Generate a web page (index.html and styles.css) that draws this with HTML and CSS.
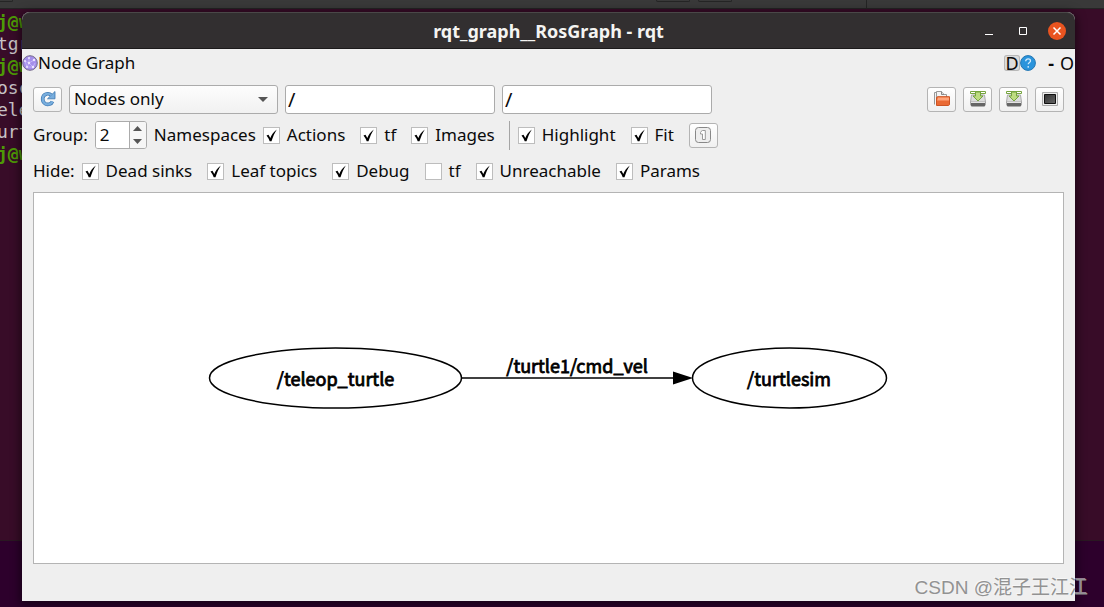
FILE: index.html
```html
<!DOCTYPE html>
<html lang="en">
<head>
<meta charset="utf-8">
<title>rqt_graph__RosGraph - rqt</title>
<link rel="stylesheet" href="styles.css">
</head>
<body>
<div class="desktop">
  <div class="terminal">
    <div class="terminal-bar"><span class="tab tab-left"></span><span class="tab tab-a"></span><span class="tab tab-b"></span><span class="tab-edge"></span></div>
    <div class="terminal-text">
      <div class="prompt">j@w</div>
      <div>tgr</div>
      <div class="prompt">j@w</div>
      <div>osc</div>
      <div>ele</div>
      <div>urt</div>
      <div class="prompt">j@w</div>
    </div>
  </div>

  <main class="window">
    <header class="titlebar">
      <h1 class="title">rqt_graph__RosGraph - rqt</h1>
      <div class="window-buttons">
        <button class="win-btn" aria-label="Minimize"><svg width="10" height="10" viewBox="0 0 10 10"><path d="M1 8.500h8" stroke="#fff" fill="none"/></svg></button>
        <button class="win-btn" aria-label="Maximize"><svg width="10" height="10" viewBox="0 0 10 10"><path d="M1.500 1.500h7v7h-7z" stroke="#fff" fill="none"/></svg></button>
        <button class="win-btn close" aria-label="Close"><svg width="10" height="10" viewBox="0 0 10 10"><path d="M1.500 1.500l7 7M8.500 1.500l-7 7" stroke="#fff" stroke-width="1.500" fill="none"/></svg></button>
      </div>
    </header>

    <div class="dock-title">
      <svg width="16" height="16" viewBox="0 0 16 16"><circle cx="8" cy="8" r="7.300" fill="#a48eea" stroke="#74698c"/><path d="M3 6l4 2 5-3M7 8l-2 4M7 8l4 4 2-4M7 8V3M3 6l2 6 6 0" stroke="#cfc0ff" stroke-width=".7" fill="none"/><g fill="#eee6ff"><circle cx="3" cy="6" r="1"/><circle cx="7" cy="8" r="1.200"/><circle cx="12" cy="5" r="1.200"/><circle cx="5" cy="12" r="1"/><circle cx="11" cy="12" r="1.200"/><circle cx="7" cy="3" r="1"/></g></svg>
      <h2 class="dock-name">Node Graph</h2>
      <div class="dock-actions">
        <button class="dock-btn boxed" aria-label="Reload">D</button>
        <button class="dock-btn" aria-label="Help"><svg width="16" height="16" viewBox="0 0 16 16"><circle cx="8" cy="8" r="7.400" fill="#2a94dc" stroke="#2476b2"/><path d="M5.700 6.200c0-3.300 4.800-3 4.800-.3 0 1.600-2.300 1.600-2.300 3.400M8.200 11v1.700" stroke="#d4ebfc" stroke-width="1.300" fill="none"/></svg></button>
        <button class="dock-btn dash">-</button>
        <button class="dock-btn">O</button>
      </div>
    </div>

    <div class="content">
      <div class="row">
        <button class="tool-btn" aria-label="Refresh"><svg width="18" height="18" viewBox="0 0 18 18"><path d="M13.500 11.500c-1 2.500-4.500 3.800-7.200 2.200C2.300 11.200 3 5 7.500 3.900c2-.4 3.600.1 4.900 1.400" stroke="#3c77b0" stroke-width="3.600" fill="none"/><path d="M16 1.500v7.300H8.500z" fill="#78aede" stroke="#3c77b0" stroke-width=".8"/><path d="M13.500 11.500c-1 2.500-4.500 3.800-7.200 2.200C2.300 11.200 3 5 7.500 3.900c2-.4 3.600.1 4.900 1.400" stroke="#78aede" stroke-width="2.200" fill="none"/></svg></button>
        <div class="combo">
          <select class="field" aria-label="Graph type"><option>Nodes only</option><option>Nodes/Topics (active)</option><option>Nodes/Topics (all)</option></select>
          <svg class="combo-arrow" width="10" height="5" viewBox="0 0 10 5"><path d="M0 0h10L5 5z" fill="#555"/></svg>
        </div>
        <input class="field filter" type="text" value="/" aria-label="Node filter">
        <input class="field filter" type="text" value="/" aria-label="Topic filter">
        <div class="file-tools">
          <button class="tool-btn" aria-label="Open"><svg width="18" height="18" viewBox="0 0 18 18"><path d="M1.500 14.500V2.500H4M3.500 14V1.500h5l3 3h2V8" fill="#f4f4f4" stroke="#999"/><path d="M8.500 1.500v3h3" fill="#ddd" stroke="#888"/><path d="M3.500 7.500l1-.8h12v8l-1 .8h-12z" fill="#ea6a34" stroke="#cc5424"/><path d="M5 7.500h11v3H4z" fill="#ffa47a"/></svg></button>
          <button class="tool-btn" aria-label="Save as DOT"><svg width="18" height="18" viewBox="0 0 18 18"><path d="M2.500 5l-1 7h15l-1-7z" fill="#dcdcdc" stroke="#aaa"/><path d="M1.500 12h15v3l-1 1.500h-13l-1-1.500z" fill="#666"/><path d="M2 12.500h14" stroke="#e4e4e4"/><path d="M1.500 1.500h15v2h-15z" fill="#fff" stroke="#76a53e"/><path d="M6.500 2h5v4h2.500L9 11 4 6h2.500z" fill="#bddc80" stroke="#75a33d"/></svg></button>
          <button class="tool-btn" aria-label="Save as SVG"><svg width="18" height="18" viewBox="0 0 18 18"><path d="M2.500 5l-1 7h15l-1-7z" fill="#dcdcdc" stroke="#aaa"/><path d="M1.500 12h15v3l-1 1.500h-13l-1-1.500z" fill="#666"/><path d="M2 12.500h14" stroke="#e4e4e4"/><path d="M1.500 1.500h15v2h-15z" fill="#fff" stroke="#76a53e"/><path d="M6.500 2h5v4h2.500L9 11 4 6h2.500z" fill="#bddc80" stroke="#75a33d"/></svg></button>
          <button class="tool-btn" aria-label="Save as image"><svg width="18" height="18" viewBox="0 0 18 18"><defs><linearGradient id="screen" x2="1" y2="1"><stop stop-color="#333"/><stop offset="1" stop-color="#666"/></linearGradient></defs><path d="M1.500 2.500h15v13h-15z" fill="#eee" stroke="#aaa"/><path d="M3.500 4.500h11v9h-11z" fill="url(#screen)" stroke="#111"/></svg></button>
        </div>
      </div>

      <div class="row">
        <div class="pair">
          <label for="group">Group:</label>
          <div class="spin">
            <input id="group" class="spin-value" type="text" inputmode="numeric" value="2">
            <div class="spin-buttons">
              <button aria-label="Increase"><svg width="9" height="5" viewBox="0 0 9 5"><path d="M0 5h9L4.500 0z" fill="#555"/></svg></button>
              <button aria-label="Decrease"><svg width="9" height="5" viewBox="0 0 9 5"><path d="M0 0h9L4.500 5z" fill="#555"/></svg></button>
            </div>
          </div>
        </div>
        <div class="pair">
          <span>Namespaces</span>
          <div class="checks">
            <label class="check"><input type="checkbox" checked>Actions</label>
            <label class="check"><input type="checkbox" checked>tf</label>
            <label class="check"><input type="checkbox" checked>Images</label>
            <span class="divider"></span>
            <label class="check"><input type="checkbox" checked>Highlight</label>
            <label class="check"><input type="checkbox" checked>Fit</label>
            <button class="tool-btn" aria-label="Fit in view"><svg width="18" height="18" viewBox="0 0 18 18"><rect x="1.500" y="1.500" width="15" height="15" rx="3" fill="#eee" stroke="#888"/><path d="M7 5.500l1.500-1h2.800v9H8.500V8H6.500V6.500z" fill="#fff" stroke="#999"/></svg></button>
          </div>
        </div>
      </div>

      <div class="row">
        <div class="pair">
          <span>Hide:</span>
          <div class="checks">
            <label class="check"><input type="checkbox" checked>Dead sinks</label>
            <label class="check"><input type="checkbox" checked>Leaf topics</label>
            <label class="check"><input type="checkbox" checked>Debug</label>
            <label class="check"><input type="checkbox">tf</label>
            <label class="check"><input type="checkbox" checked>Unreachable</label>
            <label class="check"><input type="checkbox" checked>Params</label>
          </div>
        </div>
      </div>

      <div class="view">
        <svg class="graph" viewBox="0 0 1029 370" role="img" aria-label="ROS graph">
          <g fill="none" stroke="#000" stroke-width="1.500">
            <ellipse cx="301.500" cy="185" rx="126" ry="30"/>
            <ellipse cx="755.500" cy="185" rx="97" ry="30"/>
            <path d="M428 185h212"/>
          </g>
          <path d="M639 178.500l20 6.500-20 6.500z"/>
          <g class="graph-text">
            <text x="301.500" y="193">/teleop_turtle</text>
            <text x="543" y="180">/turtle1/cmd_vel</text>
            <text x="755" y="193">/turtlesim</text>
          </g>
        </svg>
      </div>
    </div>
  </main>
  <div class="watermark">CSDN @混子王江江</div>
</div>
</body>
</html>
```
FILE: styles.css
```css
* { box-sizing: border-box; }
body {
  margin: 0;
  font: 17px/24px "Noto Sans", "Open Sans", sans-serif;
  color: #0a0a0a;
}
button, input, select { font: inherit; color: inherit; }
button { padding: 0; border: 0; background: none; }
svg { display: block; }

.desktop {
  position: relative;
  display: flex;
  min-height: 100vh;
  padding: 12px 29px 6px 22px;
  overflow: hidden;
  background: #2d002c;
}
.terminal {
  position: absolute;
  inset: 0 0 66px;
  background: #380c28;
  border-bottom: 1px solid #2a1822;
}
.terminal-bar {
  position: relative;
  height: 9px;
  background: #393939;
  border-bottom: 1px solid #242424;
}
.tab {
  position: absolute;
  top: 0;
  width: 34px;
  height: 2px;
  border: 1px solid #252525;
  border-top: 0;
  border-radius: 0 0 3px 3px;
}
.tab-left { left: -21px; }
.tab-a { left: 656px; }
.tab-b { left: 698px; }
.tab-edge {
  position: absolute;
  left: 866px;
  width: 1px;
  height: 8px;
  background: #242424;
}
.terminal-text {
  margin-left: -3px;
  padding-top: 2px;
  font: 18px/22px "DejaVu Sans Mono", monospace;
  color: #c8c3c6;
}
.prompt { font-weight: 700; color: #4e9a06; }

.window {
  position: relative;
  display: flex;
  flex: 1;
  flex-direction: column;
  min-width: 0;
  background: #efefef;
  border-radius: 8px 8px 0 0;
  box-shadow: 0 2px 10px 2px rgba(0, 0, 0, .5);
}
.titlebar {
  display: grid;
  grid-template-columns: 1fr auto 1fr;
  align-items: center;
  height: 37px;
  padding: 0 9px;
  background: #322f30;
  border-top: 1px solid #4a4848;
  border-bottom: 1px solid #1c1a1b;
  border-radius: 8px 8px 0 0;
}
.title {
  grid-column: 2;
  margin: 0;
  font-size: 18px;
  line-height: 22px;
  font-weight: 700;
  color: #f4f4f2;
}
.window-buttons {
  display: flex;
  gap: 16px;
  justify-content: flex-end;
}
.win-btn {
  display: grid;
  place-items: center;
  width: 18px;
  height: 18px;
  border-radius: 50%;
}
.win-btn.close { background: #e95420; }

.dock-title {
  display: flex;
  align-items: center;
  height: 28px;
}
.dock-name { margin: 0; font-size: 17px; font-weight: 400; }
.dock-actions {
  display: flex;
  align-items: center;
  margin-left: auto;
  padding-right: 1px;
}
.dock-btn { font-size: 18px; line-height: 16px; }
.boxed {
  width: 16px;
  height: 16px;
  background: #dcdcdc;
  border-radius: 3px;
  box-shadow: inset 0 0 0 1px #b8b8b8;
}
.dash { margin: 0 6px 0 12px; font-weight: 700; }

.content {
  display: flex;
  flex: 1;
  flex-direction: column;
  gap: 6px;
  padding: 7px 11px 37px;
}
.row {
  display: flex;
  align-items: center;
  gap: 7px;
  height: 30px;
}
.field {
  width: 210px;
  height: 29px;
  padding: 0 4px;
  background: #fff;
  border: 1px solid #ababab;
  border-radius: 3px;
}
.combo { position: relative; }
.combo .field {
  appearance: none;
  display: block;
  width: 209px;
  background: linear-gradient(#fdfdfd, #f1f1f1);
}
.combo-arrow {
  position: absolute;
  top: 12px;
  right: 10px;
  pointer-events: none;
}
.field.filter { padding: 0 2px; font-size: 20px; }
.tool-btn {
  display: grid;
  flex: none;
  place-items: center;
  width: 29px;
  height: 25px;
  background: linear-gradient(#fff, #f0f0f0);
  border: 1px solid #b4b4b4;
  border-radius: 3px;
}
.file-tools { display: flex; gap: 7px; margin-left: auto; }
.pair { display: flex; align-items: center; gap: 7px; }
.spin {
  display: flex;
  width: 52px;
  height: 28px;
  overflow: hidden;
  background: #fff;
  border: 1px solid #ababab;
  border-radius: 3px;
}
.spin-value {
  flex: 1;
  min-width: 0;
  padding: 0 4px;
  border: 0;
}
.spin-buttons {
  display: grid;
  width: 17px;
  background: #f6f6f6;
  border-left: 1px solid #ababab;
}
.spin-buttons button { display: grid; place-items: center; }

.checks { display: flex; align-items: center; gap: 15px; }
.check {
  display: flex;
  align-items: center;
  gap: 7px;
  white-space: nowrap;
}
.check input {
  appearance: none;
  flex: none;
  width: 17px;
  height: 17px;
  margin: 0;
  background: #fff center / 15px 15px no-repeat;
  border: 1px solid #bdbdbd;
}
.check input:checked {
  background-image: url("data:image/svg+xml,%3Csvg xmlns='http://www.w3.org/2000/svg' viewBox='0 0 15 15'%3E%3Cpath d='M2.500 7.500l2-.8L6.300 10C7.500 7 9.500 4 12.800 1.500 10.600 5 8.800 9 7.500 13.300H5.700C5 11.300 4 9.300 2.500 7.500z'/%3E%3C/svg%3E");
}
.divider {
  width: 1px;
  height: 29px;
  margin: 0 -7px 0 -1px;
  background: #a5a5a5;
}
.view {
  display: flex;
  flex: 1;
  min-height: 0;
  background: #fff;
  border: 1px solid #b4b4b4;
}
.graph { width: 100%; height: 100%; }
.graph-text {
  font: 18px "Noto Sans CJK SC", sans-serif;
  text-anchor: middle;
  stroke: #000;
  stroke-width: .8px;
}
.watermark {
  position: absolute;
  right: 16px;
  bottom: 6px;
  font: 19px/26px "Liberation Sans", "Noto Sans CJK SC", sans-serif;
  color: #929292;
  text-shadow: -1px -1px 0 rgba(255, 255, 255, .5);
}
```
